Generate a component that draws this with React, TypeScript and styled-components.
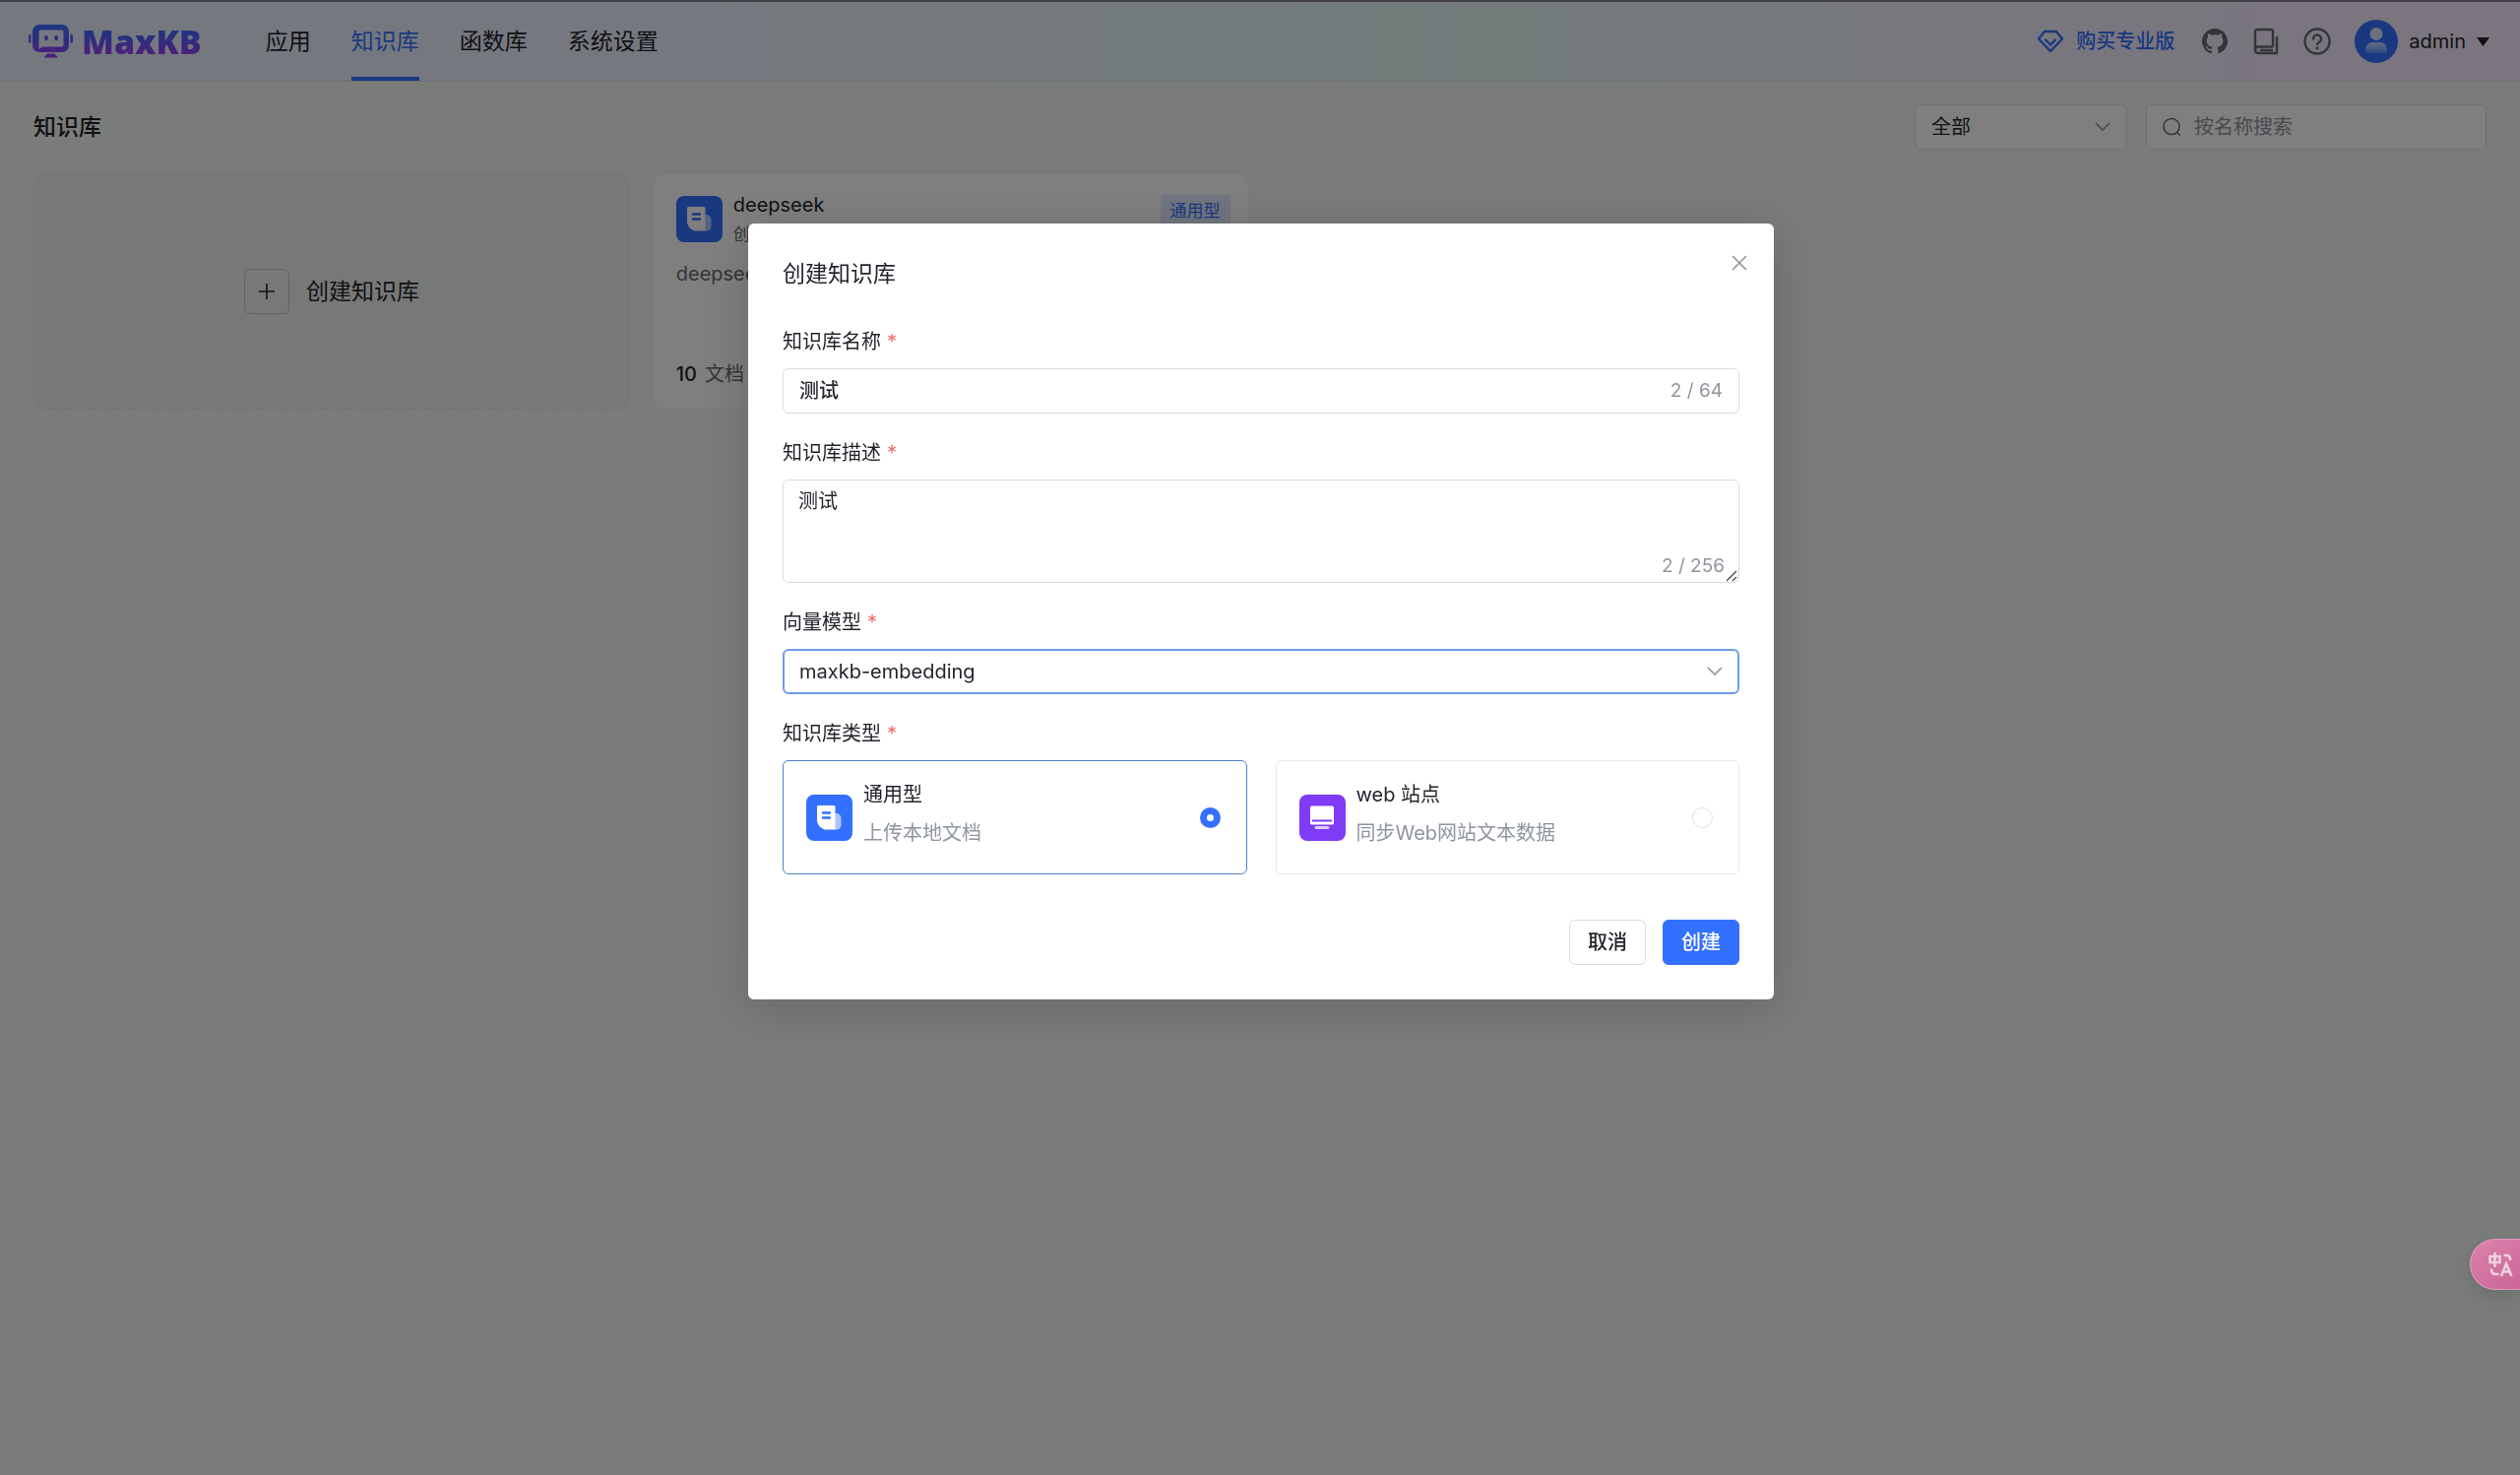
import React, { useState } from 'react';
import styled, { createGlobalStyle } from 'styled-components';

const GlobalStyle = createGlobalStyle`
  *, *::before, *::after { box-sizing: border-box; }
  body {
    margin: 0;
    background: #f5f8f5;
    color: #1f2329;
    font: 400 20px/32px Inter, "Noto Sans CJK SC", sans-serif;
  }
  button, input, select, textarea { font: inherit; color: inherit; }
  h1, h2, h3, p { margin: 0; font-weight: 400; }
`;

const Page = styled.div`
  min-height: 100vh;
`;

/* ---------- header ---------- */

const Header = styled.header`
  display: flex;
  align-items: center;
  height: 83px;
  padding: 0 31px 0 29px;
  border-top: 2px solid #7d7d88;
  border-bottom: 1px solid #dcdee2;
  background: linear-gradient(90deg, #ebf0ff 24%, #e5f8f6 56%, #f4ebfe 90%);
`;

const Brand = styled.a`
  display: flex;
  align-items: center;
  gap: 9px;
  margin-right: 65px;
  text-decoration: none;
`;

const BrandName = styled.span`
  font: 900 34px/40px "Noto Sans", sans-serif;
  color: transparent;
  background: linear-gradient(180deg, #3370ff 15%, #a03cf5 90%);
  background-clip: text;
  -webkit-background-clip: text;
`;

const Nav = styled.nav`
  display: flex;
  align-self: stretch;
  gap: 41px;
`;

const NavLink = styled.a<{ $active?: boolean }>`
  display: flex;
  align-items: center;
  font-size: 23px;
  text-decoration: none;
  padding-top: 4px;
  color: ${(p) => (p.$active ? '#3370ff' : '#1f2329')};
  border-bottom: 4px solid ${(p) => (p.$active ? '#3370ff' : 'transparent')};
`;

const HeaderTools = styled.div`
  display: flex;
  align-items: center;
  gap: 24px;
  margin-left: auto;
`;

const BuyLink = styled.a`
  display: flex;
  align-items: center;
  gap: 12px;
  margin-right: 3px;
  color: #3370ff;
  font-weight: 500;
  text-decoration: none;
`;

const IconButton = styled.button`
  display: grid;
  place-items: center;
  width: 28px;
  height: 28px;
  padding: 0;
  border: 0;
  background: none;
  color: #646a73;
`;

const UserButton = styled.button`
  display: flex;
  align-items: center;
  gap: 11px;
  padding: 0;
  border: 0;
  background: none;
`;

/* ---------- list ---------- */

const Main = styled.main`
  padding: 23px 34px;
`;

const Toolbar = styled.div`
  display: flex;
  align-items: center;
  gap: 19px;
  margin-bottom: 23px;
`;

const PageTitle = styled.h1`
  margin-right: auto;
  font-size: 23px;
  font-weight: 500;
`;

const Control = styled.div<{ $width?: number; $focused?: boolean }>`
  display: flex;
  align-items: center;
  gap: 13px;
  width: ${(p) => (p.$width ? `${p.$width}px` : '100%')};
  height: 46px;
  padding: 0 ${(p) => (p.$focused ? '15px' : '16px')};
  border-radius: 6px;
  background: #fff;
  border: ${(p) => (p.$focused ? '2px solid #6f9bea' : '1px solid #d9dbdf')};
  color: #8f959e;
`;

const TextInput = styled.input<{ $strong?: boolean }>`
  flex: 1;
  min-width: 0;
  padding: 0;
  border: 0;
  outline: 0;
  background: none;
  color: #1f2329;
  font-weight: ${(p) => (p.$strong ? 500 : 400)};
  &::placeholder { color: #8f959e; opacity: 1; }
`;

const Picker = styled.select`
  flex: 1;
  min-width: 0;
  padding: 0;
  border: 0;
  outline: 0;
  appearance: none;
  background: none;
  color: #1f2329;
`;

const CardGrid = styled.div`
  display: grid;
  grid-template-columns: repeat(4, 1fr);
  gap: 23px;
`;

const CreateCard = styled.button`
  display: flex;
  align-items: center;
  justify-content: center;
  gap: 17px;
  min-height: 241px;
  border: 1px dashed #e4e6e6;
  border-radius: 12px;
  background: #eff1f0;
  font-size: 23px;
`;

const PlusBox = styled.span`
  display: grid;
  place-items: center;
  width: 46px;
  height: 46px;
  border: 1px solid #c4c6ca;
  border-radius: 6px;
`;

const Card = styled.article`
  display: flex;
  flex-direction: column;
  min-height: 241px;
  padding: 16px 18px 19px 23px;
  border: 1px solid #f0f2f2;
  border-radius: 12px;
  background: #fff;
`;

const CardHead = styled.div`
  display: flex;
  align-items: center;
  gap: 11px;
`;

const CardTitles = styled.div`
  flex: 1;
`;

const CardName = styled.h3`
  font-size: 20px;
  line-height: 32px;
`;

const Muted = styled.p`
  color: #646a73;
`;

const CardMeta = styled(Muted)`
  font-size: 17px;
  line-height: 28px;
`;

const CardDescription = styled(Muted)`
  margin-top: 10px;
`;

const CardFooter = styled(Muted)`
  display: flex;
  gap: 8px;
  margin-top: auto;
`;

const Count = styled.b`
  font-weight: 500;
  color: #1f2329;
`;

const Tag = styled.span`
  align-self: flex-start;
  margin-top: 6px;
  padding: 0 10px;
  border-radius: 3px;
  background: #e3ebff;
  color: #3370ff;
  font-size: 17px;
`;

/* ---------- dialog ---------- */

const Overlay = styled.div`
  position: fixed;
  inset: 0;
  padding: 227px 0 0 2px;
  background: rgba(0, 0, 0, 0.5);
`;

const Dialog = styled.form`
  position: relative;
  width: 1042px;
  margin: 0 auto;
  padding: 35px;
  border-radius: 6px;
  background: #fff;
  box-shadow: 0 8px 48px rgba(0, 0, 0, 0.18);
`;

const DialogTitle = styled.h2`
  margin-bottom: 37px;
  font-size: 23px;
`;

const CloseButton = styled.button`
  position: absolute;
  top: 24px;
  right: 19px;
  display: grid;
  place-items: center;
  width: 32px;
  height: 32px;
  padding: 0;
  border: 0;
  background: none;
`;

const Fields = styled.div`
  display: grid;
  gap: 24px;
`;

const Field = styled.div`
  display: grid;
  gap: 11px;
`;

const Required = styled.span`
  margin-left: 6px;
  color: #f56c6c;
`;

const Counter = styled.span`
  font-size: 19px;
  color: #8f959e;
`;

const AreaBox = styled.div`
  position: relative;
  display: flex;
`;

const TextArea = styled.textarea`
  flex: 1;
  height: 105px;
  padding: 5px 15px;
  border: 1px solid #d9dbdf;
  border-radius: 6px;
  outline: 0;
  resize: none;
`;

const AreaCounter = styled(Counter)`
  position: absolute;
  right: 15px;
  bottom: 1px;
`;

const Grip = styled.svg`
  position: absolute;
  right: 2px;
  bottom: 1px;
`;

const TypeGroup = styled.div`
  display: grid;
  grid-template-columns: 1fr 1fr;
  gap: 29px;
`;

const TypeCard = styled.label<{ $selected: boolean }>`
  display: flex;
  align-items: center;
  gap: 11px;
  height: 116px;
  padding: 0 26px 0 23px;
  border: 1px solid ${(p) => (p.$selected ? '#4f7fcc' : '#e8eaec')};
  border-radius: 6px;
`;

const TypeText = styled.span`
  display: grid;
  flex: 1;
  gap: 7px;
  padding-bottom: 7px;
`;

const TypeHint = styled.span`
  color: #8f959e;
`;

const Radio = styled.input`
  appearance: none;
  width: 21px;
  height: 21px;
  margin: 0;
  border: 1px solid #dcdfe3;
  border-radius: 50%;
  background: #fff;
  &:checked { border: 7px solid #3370ff; }
`;

const Actions = styled.div`
  display: flex;
  justify-content: flex-end;
  gap: 17px;
  margin-top: 46px;
`;

const Button = styled.button<{ $primary?: boolean }>`
  height: 46px;
  padding: 0 18px;
  border: 1px solid ${(p) => (p.$primary ? '#3370ff' : '#d9dbdf')};
  border-radius: 6px;
  background: ${(p) => (p.$primary ? '#3370ff' : '#fff')};
  color: ${(p) => (p.$primary ? '#fff' : '#1f2329')};
  font-weight: 500;
`;

const TranslateTab = styled.button`
  position: fixed;
  right: 0;
  top: 1258px;
  display: flex;
  align-items: center;
  width: 51px;
  height: 52px;
  padding: 0 0 0 18px;
  border: 1px solid #dc9bbc;
  border-right: 0;
  border-radius: 26px 0 0 26px;
  background: linear-gradient(150deg, #dc82ad, #cb6696);
  box-shadow: 0 6px 20px rgba(0, 0, 0, 0.12);
`;

/* ---------- drawings ---------- */

const LogoMark = () => (
  <svg width="45" height="34" viewBox="0 0 45 34" aria-hidden="true">
    <defs>
      <linearGradient id="logo" x1="0" y1="0" x2="0" y2="34" gradientUnits="userSpaceOnUse">
        <stop offset="0" stopColor="#3370ff" />
        <stop offset="1" stopColor="#9a3cf5" />
      </linearGradient>
    </defs>
    <path
      fill="url(#logo)"
      fillRule="evenodd"
      d="M11 0h23a7 7 0 0 1 7 7v14a7 7 0 0 1-7 7H11a7 7 0 0 1-7-7V7a7 7 0 0 1 7-7ZM12 5.500a1.500 1.500 0 0 0-1.500 1.500v18l3.500-2.500H33a2.500 2.500 0 0 0 2.500-2.500V7A1.500 1.500 0 0 0 34 5.500ZM2.500 9.500V19A2.500 2.500 0 0 1 0 16.500V12a2.500 2.500 0 0 1 2.500-2.500ZM42.500 9.500V19a2.500 2.500 0 0 0 2.500-2.500V12a2.500 2.500 0 0 0-2.500-2.500ZM19 29.500h7.500c1 2 3 2.200 3 4H16c0-1.800 2-2 3-4Z"
    />
    <ellipse cx="18" cy="13.500" rx="1.900" ry="2.700" fill="url(#logo)" />
    <ellipse cx="28" cy="13.500" rx="1.900" ry="2.700" fill="url(#logo)" />
  </svg>
);

const Diamond = () => (
  <svg width="28" height="24" viewBox="0 0 28 24" fill="none" stroke="currentColor" strokeWidth="2.400" strokeLinejoin="round" strokeLinecap="round" aria-hidden="true">
    <path d="M8 2h12l6 7.500L14 22 2 9.500Z" />
    <path d="m9 10.500 5 5 5-5" />
  </svg>
);

const Github = () => (
  <svg width="26" height="26" viewBox="0 0 16 16" fill="currentColor" aria-hidden="true">
    <path d="M8 0C3.580 0 0 3.580 0 8c0 3.540 2.290 6.530 5.470 7.590.4.070.55-.17.55-.38 0-.19-.01-.82-.01-1.490-2.010.37-2.530-.49-2.690-.94-.09-.23-.48-.94-.82-1.130-.28-.15-.68-.52-.01-.53.63-.01 1.080.58 1.230.82.72 1.210 1.870.87 2.330.66.07-.52.28-.87.51-1.070-1.780-.2-3.640-.89-3.640-3.950 0-.87.31-1.590.82-2.150-.08-.2-.36-1.020.08-2.120 0 0 .67-.21 2.200.82a7.600 7.600 0 0 1 4 0c1.530-1.040 2.200-.82 2.200-.82.44 1.100.16 1.920.08 2.120.51.56.82 1.270.82 2.150 0 3.070-1.870 3.750-3.650 3.950.29.25.54.73.54 1.480 0 1.070-.01 1.930-.01 2.200 0 .21.15.46.55.38A8.010 8.010 0 0 0 16 8c0-4.420-3.580-8-8-8Z" />
  </svg>
);

const Book = () => (
  <svg width="26" height="28" viewBox="0 0 26 28" fill="none" stroke="currentColor" strokeWidth="2.400" strokeLinejoin="round" aria-hidden="true">
    <path d="M20 19.500V4a2 2 0 0 0-2-2H4a2 2 0 0 0-2 2v19a3 3 0 0 0 3 3h19V9" />
    <path d="M2 22.500a3 3 0 0 1 3-3h15M7 23h13" />
  </svg>
);

const Help = () => (
  <svg width="28" height="28" viewBox="0 0 28 28" fill="none" stroke="currentColor" strokeWidth="2.300" strokeLinecap="round" aria-hidden="true">
    <circle cx="14" cy="14" r="12.500" />
    <path d="M10 11.500a4 4 0 1 1 6.300 3.200c-1.500 1-2.300 1.400-2.300 2.300" />
    <circle cx="14" cy="20.800" r="1.500" fill="currentColor" stroke="none" />
  </svg>
);

const Avatar = () => (
  <svg width="44" height="44" viewBox="0 0 44 44" aria-hidden="true">
    <defs>
      <linearGradient id="person" x1="0" y1="0" x2="0" y2="1">
        <stop offset="0" stopColor="#fff" stopOpacity=".75" />
        <stop offset="1" stopColor="#fff" stopOpacity=".2" />
      </linearGradient>
    </defs>
    <circle cx="22" cy="22" r="22" fill="#3370ff" />
    <circle cx="22" cy="14.500" r="6.500" fill="#fff" fillOpacity=".8" />
    <path d="M11 34v-4a7 7 0 0 1 7-7h8a7 7 0 0 1 7 7v4Z" fill="url(#person)" />
  </svg>
);

const Caret = () => (
  <svg width="13" height="9" viewBox="0 0 13 9" aria-hidden="true">
    <path d="M0 0h13L6.500 9Z" fill="#1f2329" />
  </svg>
);

const Chevron = () => (
  <svg width="16" height="10" viewBox="0 0 16 10" fill="none" stroke="#8f959e" strokeWidth="1.600" aria-hidden="true">
    <path d="m1 1 7 7 7-7" />
  </svg>
);

const Search = () => (
  <svg width="19" height="20" viewBox="0 0 19 20" fill="none" stroke="#646a73" strokeWidth="1.500" aria-hidden="true">
    <circle cx="9" cy="9.500" r="8" />
    <path d="m14.500 15.500 3 3" />
  </svg>
);

const Plus = () => (
  <svg width="18" height="18" viewBox="0 0 18 18" stroke="#1f2329" strokeWidth="1.600" aria-hidden="true">
    <path d="M9 1v16M1 9h16" />
  </svg>
);

const Cross = () => (
  <svg width="16" height="16" viewBox="0 0 16 16" stroke="#8f959e" strokeWidth="1.600" aria-hidden="true">
    <path d="m1 1 14 14M15 1 1 15" />
  </svg>
);

const DocIcon = () => (
  <svg width="47" height="47" viewBox="0 0 47 47" aria-hidden="true">
    <rect width="47" height="47" rx="8" fill="#3370ff" />
    <path d="M28 19h2.500a5 5 0 0 1 5 5v7a4.500 4.500 0 0 1-4.500 4.500h-3Z" fill="#fff" fillOpacity=".6" />
    <path d="M13 11h15a1.500 1.500 0 0 1 1.500 1.500v23H21A10 10 0 0 1 11 25V12.500A1.500 1.500 0 0 1 13 11Z" fill="#fff" />
    <path d="M17 18.500h7M17 23.500h7" stroke="#3370ff" strokeWidth="2.400" strokeLinecap="round" />
  </svg>
);

const WebIcon = () => (
  <svg width="47" height="47" viewBox="0 0 47 47" aria-hidden="true">
    <rect width="47" height="47" rx="8" fill="#7f3bf5" />
    <rect x="11" y="11.500" width="24" height="19" rx="1.500" fill="#fff" />
    <path d="M13 26.500h20" stroke="#7f3bf5" strokeWidth="2" />
    <path d="M17 33.500h12" stroke="#fff" strokeOpacity=".75" strokeWidth="3" strokeLinecap="round" />
  </svg>
);

const TranslateIcon = () => (
  <svg width="25" height="25" viewBox="0 0 25 25" fill="none" stroke="#ecd3e1" strokeWidth="2.600" aria-hidden="true">
    <path d="M1.500 4h10v6h-10ZM6.500 0v15" />
    <path d="M15.500 3H19a3 3 0 0 1 3 3v2M3 16.500V18a4 4 0 0 0 4 4h3.500" />
    <path d="M13 24l5-12.500L23.500 24M15 19.500h7" />
  </svg>
);

/* ---------- page ---------- */

const navItems = ['应用', '知识库', '函数库', '系统设置'];

const types = [
  { id: 'general', title: '通用型', hint: '上传本地文档', icon: <DocIcon /> },
  { id: 'web', title: 'web 站点', hint: '同步Web网站文本数据', icon: <WebIcon /> },
];

export default function App() {
  const [name, setName] = useState('测试');
  const [description, setDescription] = useState('测试');
  const [type, setType] = useState('general');

  return (
    <Page>
      <GlobalStyle />
      <Header>
        <Brand href="#">
          <LogoMark />
          <BrandName>MaxKB</BrandName>
        </Brand>
        <Nav>
          {navItems.map((item) => (
            <NavLink key={item} href="#" $active={item === '知识库'}>{item}</NavLink>
          ))}
        </Nav>
        <HeaderTools>
          <BuyLink href="#"><Diamond />购买专业版</BuyLink>
          <IconButton type="button" aria-label="GitHub"><Github /></IconButton>
          <IconButton type="button" aria-label="文档"><Book /></IconButton>
          <IconButton type="button" aria-label="帮助"><Help /></IconButton>
          <UserButton type="button"><Avatar />admin<Caret /></UserButton>
        </HeaderTools>
      </Header>

      <Main>
        <Toolbar>
          <PageTitle>知识库</PageTitle>
          <Control $width={216}>
            <Picker aria-label="范围"><option>全部</option></Picker>
            <Chevron />
          </Control>
          <Control $width={346}>
            <Search />
            <TextInput aria-label="搜索" placeholder="按名称搜索" />
          </Control>
        </Toolbar>
        <CardGrid>
          <CreateCard type="button"><PlusBox><Plus /></PlusBox>创建知识库</CreateCard>
          <Card>
            <CardHead>
              <DocIcon />
              <CardTitles>
                <CardName>deepseek</CardName>
                <CardMeta>创建者: admin</CardMeta>
              </CardTitles>
              <Tag>通用型</Tag>
            </CardHead>
            <CardDescription>deepseek</CardDescription>
            <CardFooter><Count>10</Count>文档</CardFooter>
          </Card>
        </CardGrid>
      </Main>

      <Overlay>
        <Dialog onSubmit={(e) => e.preventDefault()} role="dialog" aria-labelledby="dialog-title">
          <DialogTitle id="dialog-title">创建知识库</DialogTitle>
          <CloseButton type="button" aria-label="关闭"><Cross /></CloseButton>
          <Fields>
            <Field>
              <label htmlFor="name">知识库名称<Required>*</Required></label>
              <Control>
                <TextInput id="name" $strong maxLength={64} value={name} onChange={(e) => setName(e.target.value)} />
                <Counter>{name.length} / 64</Counter>
              </Control>
            </Field>
            <Field>
              <label htmlFor="description">知识库描述<Required>*</Required></label>
              <AreaBox>
                <TextArea id="description" maxLength={256} value={description} onChange={(e) => setDescription(e.target.value)} />
                <AreaCounter>{description.length} / 256</AreaCounter>
                <Grip width="12" height="12" viewBox="0 0 12 12" stroke="#4a4a4a" strokeWidth="1.400" aria-hidden="true">
                  <path d="M1 11 11 1M7 11l4-4" />
                </Grip>
              </AreaBox>
            </Field>
            <Field>
              <label htmlFor="model">向量模型<Required>*</Required></label>
              <Control $focused>
                <Picker id="model"><option>maxkb-embedding</option></Picker>
                <Chevron />
              </Control>
            </Field>
            <Field role="radiogroup" aria-labelledby="type-label">
              <span id="type-label">知识库类型<Required>*</Required></span>
              <TypeGroup>
                {types.map((t) => (
                  <TypeCard key={t.id} $selected={type === t.id}>
                    {t.icon}
                    <TypeText>
                      <span>{t.title}</span>
                      <TypeHint>{t.hint}</TypeHint>
                    </TypeText>
                    <Radio type="radio" name="type" checked={type === t.id} onChange={() => setType(t.id)} />
                  </TypeCard>
                ))}
              </TypeGroup>
            </Field>
          </Fields>
          <Actions>
            <Button type="button">取消</Button>
            <Button type="submit" $primary>创建</Button>
          </Actions>
        </Dialog>
      </Overlay>
      <TranslateTab type="button" aria-label="翻译"><TranslateIcon /></TranslateTab>
    </Page>
  );
}
